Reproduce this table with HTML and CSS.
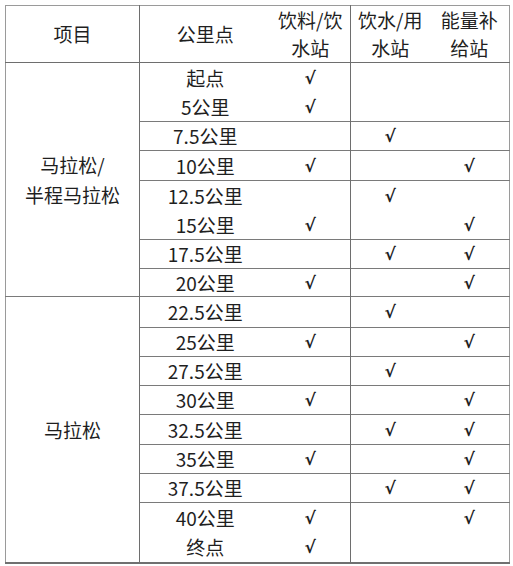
FILE: index.html
```html
<!DOCTYPE html>
<html lang="zh-CN">
<head>
<meta charset="utf-8">
<title>补给站</title>
<link rel="stylesheet" href="styles.css">
</head>
<body>
<table class="supply">
  <colgroup>
    <col class="c-item">
    <col class="c-km">
    <col class="c-a">
    <col class="c-b">
    <col class="c-c">
  </colgroup>
  <thead>
    <tr>
      <th class="sep">项目</th>
      <th>公里点</th>
      <th class="sep">饮料/饮<br>水站</th>
      <th>饮水/用<br>水站</th>
      <th>能量补<br>给站</th>
    </tr>
  </thead>
  <tbody>
    <tr class="h30">
      <td class="group sep" rowspan="8">马拉松/<br>半程马拉松</td>
      <td>起点</td><td class="sep ck">√</td><td class="ck"></td><td class="ck"></td>
    </tr>
    <tr class="h29 join"><td>5公里</td><td class="sep ck">√</td><td class="ck"></td><td class="ck"></td></tr>
    <tr class="h29"><td>7.5公里</td><td class="sep ck"></td><td class="ck">√</td><td class="ck"></td></tr>
    <tr class="h30"><td>10公里</td><td class="sep ck">√</td><td class="ck"></td><td class="ck">√</td></tr>
    <tr class="h30"><td>12.5公里</td><td class="sep ck"></td><td class="ck">√</td><td class="ck"></td></tr>
    <tr class="h29 join"><td>15公里</td><td class="sep ck">√</td><td class="ck"></td><td class="ck">√</td></tr>
    <tr class="h29"><td>17.5公里</td><td class="sep ck"></td><td class="ck">√</td><td class="ck">√</td></tr>
    <tr class="h28"><td>20公里</td><td class="sep ck">√</td><td class="ck"></td><td class="ck">√</td></tr>
    <tr class="h31">
      <td class="group sep" rowspan="9">马拉松</td>
      <td>22.5公里</td><td class="sep ck"></td><td class="ck">√</td><td class="ck"></td>
    </tr>
    <tr class="h29"><td>25公里</td><td class="sep ck">√</td><td class="ck"></td><td class="ck">√</td></tr>
    <tr class="h29"><td>27.5公里</td><td class="sep ck"></td><td class="ck">√</td><td class="ck"></td></tr>
    <tr class="h29"><td>30公里</td><td class="sep ck">√</td><td class="ck"></td><td class="ck">√</td></tr>
    <tr class="h30"><td>32.5公里</td><td class="sep ck"></td><td class="ck">√</td><td class="ck">√</td></tr>
    <tr class="h29"><td>35公里</td><td class="sep ck">√</td><td class="ck"></td><td class="ck">√</td></tr>
    <tr class="h29"><td>37.5公里</td><td class="sep ck"></td><td class="ck">√</td><td class="ck">√</td></tr>
    <tr class="h30"><td>40公里</td><td class="sep ck">√</td><td class="ck"></td><td class="ck">√</td></tr>
    <tr class="h30 join"><td>终点</td><td class="sep ck">√</td><td class="ck"></td><td class="ck"></td></tr>
  </tbody>
</table>
</body>
</html>
```
FILE: styles.css
```css
html, body {
  margin: 0;
  padding: 0;
  background: #ffffff;
}
body {
  padding: 5px 0 0 5px;
  font-family: "Noto Sans CJK SC", "Noto Sans", sans-serif;
  color: #1f1f1f;
}
.supply {
  border-collapse: collapse;
  table-layout: fixed;
  width: 504px;
  border: 1px solid #9a9a9a;
  border-bottom: 2px solid #707070;
  font-size: 19px;
  line-height: 28px;
}
.c-item { width: 134px; }
.c-km { width: 131px; }
.c-a { width: 80px; }
.c-b { width: 79px; }
.c-c { width: 80px; }
.supply th {
  font-weight: normal;
  height: 56px;
  padding: 0;
  text-align: center;
  vertical-align: middle;
  line-height: 28px;
  border-bottom: 1px solid #6e6e6e;
}
.supply td {
  padding: 0;
  text-align: center;
  vertical-align: middle;
  line-height: 26px;
  border-top: 1px solid #7a7a7a;
}
.supply tr.h28 td { height: 27px; }
.supply tr.h29 td { height: 28px; }
.supply tr.h30 td { height: 29px; }
.supply tr.h31 td { height: 30px; }
.supply tr.join td {
  border-top: none;
}
.supply tr.h29.join td { height: 29px; }
.supply tr.h30.join td { height: 30px; }
.supply .sep {
  border-right: 1px solid #6e6e6e;
}
.supply td.group {
  border-top: 1px solid #7a7a7a;
  line-height: 30px;
}
.supply td.ck {
  font-family: "DejaVu Sans", sans-serif;
  font-size: 17px;
  font-weight: bold;
}
```
